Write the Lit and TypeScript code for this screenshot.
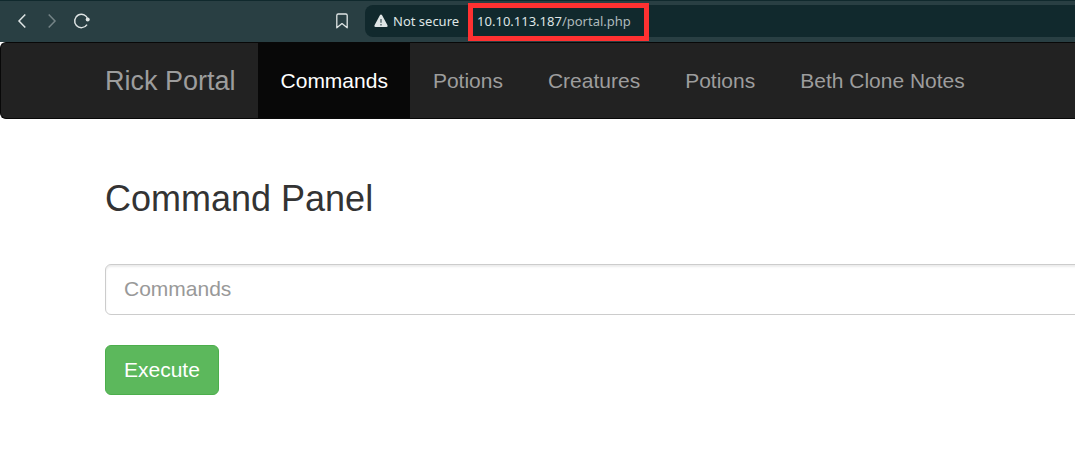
import { LitElement, html, css } from "lit";
import { customElement, property } from "lit/decorators.js";

@customElement("browser-bar")
class BrowserBar extends LitElement {
  @property() host = "";
  @property() path = "";

  static styles = css`
    :host {
      display: flex;
      align-items: center;
      justify-content: space-between;
      box-sizing: border-box;
      height: 42px;
      padding-bottom: 1px;
      border-top: 1px solid #10292d;
      background: #293f43;
      color: #dfe5e5;
      font: 13px/20px "Noto Sans", sans-serif;
    }
    .history {
      display: flex;
      gap: 10px;
      padding-left: 12px;
    }
    .icon {
      display: block;
      width: 20px;
      height: 20px;
      padding: 0;
      border: 0;
      background: none;
      color: inherit;
    }
    .icon:disabled {
      color: #758487;
    }
    svg {
      display: block;
      fill: none;
      stroke: currentColor;
      stroke-width: 1.5;
    }
    .location {
      display: flex;
      align-items: center;
      gap: 13px;
      flex: 0 0 743px;
    }
    .address {
      display: flex;
      align-items: center;
      flex: 1;
      height: 32px;
      padding-left: 8px;
      border-radius: 8px 0 0 8px;
      background: #11292d;
    }
    .warning {
      flex: none;
      margin-right: 4px;
      stroke: none;
    }
    .url {
      position: relative;
      margin-left: 18px;
      color: #aebabb;
    }
    .host {
      color: #dfe5e5;
    }
    .mark {
      position: absolute;
      inset: -8px -18px -10px -9px;
      border: 5px solid #ff3131;
    }
  `;

  render() {
    return html`
      <div class="history">
        <button class="icon" aria-label="Back">
          <svg width="20" height="20"><path d="M13.3 3.5 7 10l6.3 6.5" /></svg>
        </button>
        <button class="icon" aria-label="Forward" disabled>
          <svg width="20" height="20"><path d="m6.7 3.5 6.3 6.5-6.3 6.5" /></svg>
        </button>
        <button class="icon" aria-label="Reload">
          <svg width="20" height="20">
            <path d="M15 13.6A6.7 6.7 0 1 1 15.9 8.4" />
            <circle cx="15.7" cy="8.4" r="2" fill="currentColor" stroke="none" />
          </svg>
        </button>
      </div>
      <div class="location">
        <button class="icon" aria-label="Bookmark">
          <svg width="20" height="20">
            <path d="M4.8 16.8V4.4q0-1.4 1.4-1.4h7.6q1.4 0 1.4 1.4v12.4L10 12.6z" stroke-width="1.3" stroke-linejoin="round" />
          </svg>
        </button>
        <div class="address">
          <svg class="warning" width="16" height="16">
            <path fill="currentColor" d="M8 1.6q.7 0 1.1.7l5.4 10q.7 1.7-1 1.7h-11q-1.7 0-1-1.7l5.4-10q.4-.7 1.1-.7z" />
            <path fill="#66777a" d="M7.2 6h1.6v3.8H7.2zM7.2 11h1.6v1.5H7.2z" />
          </svg>
          <span>Not secure</span>
          <span class="url"><span class="host">${this.host}</span>${this.path}<span class="mark"></span></span>
        </div>
      </div>
    `;
  }
}

@customElement("app-root")
class AppRoot extends LitElement {
  private links = ["Commands", "Potions", "Creatures", "Potions", "Beth Clone Notes"];

  static styles = css`
    :host {
      display: block;
      overflow: hidden;
      min-height: 100vh;
      background: #fff;
      color: #333;
      font: 21px/30px "Liberation Sans", Arial, sans-serif;
    }
    .navbar {
      display: flex;
      padding-left: 104px;
      border: 1px solid #080808;
      border-right: 0;
      border-radius: 6px 0 0 6px;
      background: #222;
      white-space: nowrap;
    }
    .navbar a {
      padding: 23px 22px 22px 23px;
      color: #9d9d9d;
      text-decoration: none;
    }
    .navbar .brand {
      padding-left: 0;
      font-size: 27px;
    }
    .navbar .active {
      background: #080808;
      color: #fff;
    }
    .panel {
      padding: 60px 0 0 105px;
    }
    h1 {
      margin: 0 0 45px;
      font-size: 36px;
      line-height: 40px;
      font-weight: 500;
    }
    .field {
      display: block;
      box-sizing: border-box;
      width: calc(100% + 10px);
      height: 51px;
      margin: 0 0 30px;
      padding: 8px 18px 10px;
      border: 1px solid #ccc;
      border-radius: 6px;
      background: #fff;
      box-shadow: inset 0 2px 2px rgba(0, 0, 0, 0.075);
      color: #555;
      font: inherit;
    }
    .field::placeholder {
      color: #999;
      opacity: 1;
    }
    .execute {
      display: block;
      padding: 9px 18px;
      border: 1px solid #4cae4c;
      border-radius: 6px;
      background: #5cb85c;
      color: #fff;
      font: inherit;
    }
  `;

  render() {
    return html`
      <browser-bar host="10.10.113.187" path="/portal.php"></browser-bar>
      <nav class="navbar">
        <a class="brand" href="#">Rick Portal</a>
        ${this.links.map((label, i) => html`<a class=${i === 0 ? "active" : ""} href="#">${label}</a>`)}
      </nav>
      <main class="panel">
        <h1>Command Panel</h1>
        <form @submit=${(e: Event) => e.preventDefault()}>
          <input class="field" type="text" name="command" placeholder="Commands" aria-label="Commands" />
          <button class="execute" type="submit">Execute</button>
        </form>
      </main>
    `;
  }
}
